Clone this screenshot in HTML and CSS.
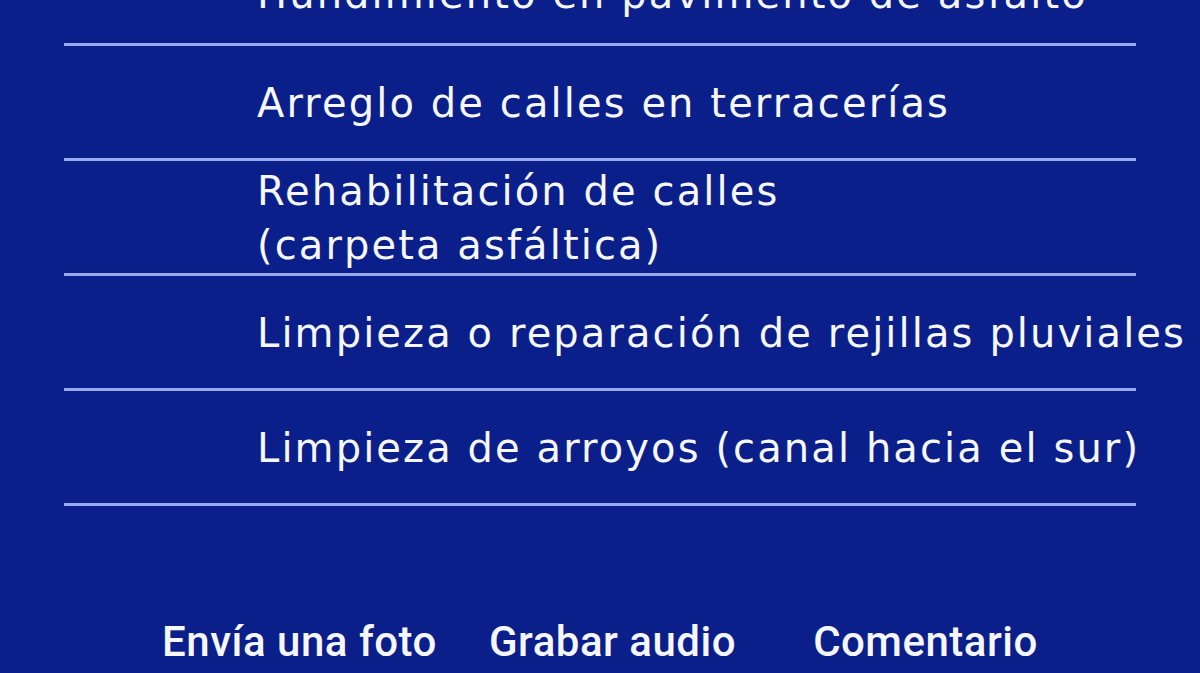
FILE: index.html
```html
<!DOCTYPE html>
<html lang="es">
<head>
<meta charset="utf-8">
<title>Reportes</title>
<link rel="stylesheet" href="styles.css">
</head>
<body>
<main class="screen">
  <ul class="options">
    <li class="option option-first"><span class="label">Hundimiento en pavimento de asfalto</span></li>
    <li class="option"><span class="label">Arreglo de calles en terracerías</span></li>
    <li class="option"><span class="label">Rehabilitación de calles<br>(carpeta asfáltica)</span></li>
    <li class="option"><span class="label">Limpieza o reparación de rejillas pluviales</span></li>
    <li class="option"><span class="label">Limpieza de arroyos (canal hacia el sur)</span></li>
  </ul>
  <nav class="actions">
    <span class="action">Envía una foto</span>
    <span class="action">Grabar audio</span>
    <span class="action">Comentario</span>
  </nav>
</main>
</body>
</html>
```
FILE: styles.css
```css
html, body {
  margin: 0;
  padding: 0;
}
body {
  background: #0a1f8a;
  width: 1200px;
  height: 673px;
  overflow: hidden;
}
.screen {
  display: flex;
  flex-direction: column;
}
.options {
  list-style: none;
  margin: -69px 64px 0 64px;
  padding: 0;
}
.option {
  box-sizing: border-box;
  height: 115px;
  border-bottom: 3px solid #98abf0;
  display: flex;
  align-items: center;
  padding-left: 193px;
  padding-top: 2px;
  white-space: nowrap;
}
.option-first {
  padding-top: 14px;
}
.label {
  font-family: "DejaVu Sans", sans-serif;
  font-size: 40px;
  line-height: 54px;
  letter-spacing: 2.1px;
  color: #f6f7fc;
}
.actions {
  display: grid;
  grid-template-columns: repeat(3, 313px);
  margin: 112px 0 0 143px;
}
.action {
  text-align: center;
  font-family: Roboto, sans-serif;
  font-size: 42px;
  font-weight: 500;
  line-height: 48px;
  letter-spacing: 0.5px;
  color: #f6f7fc;
}
```
